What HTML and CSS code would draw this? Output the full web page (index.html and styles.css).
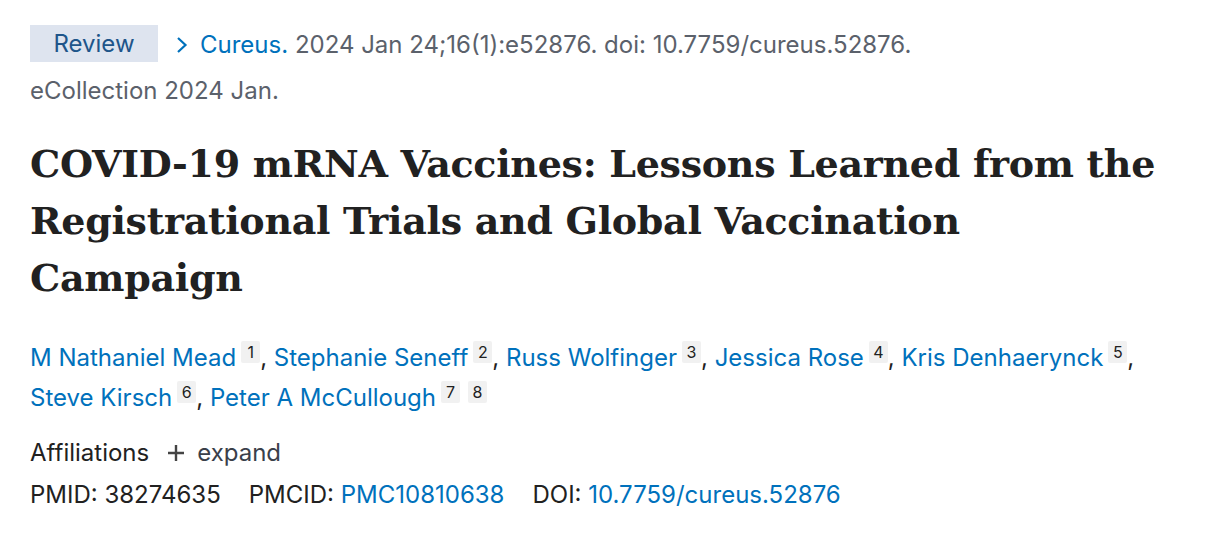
FILE: index.html
```html
<!DOCTYPE html>
<html lang="en">
<head>
<meta charset="utf-8">
<title>COVID-19 mRNA Vaccines</title>
<link rel="stylesheet" href="styles.css">
</head>
<body>
<main class="article">
  <div class="citation"><span class="badge">Review</span><span class="journal"><svg class="chev" viewBox="0 0 12 18" width="12" height="18"><path d="M2 2 L9.5 9 L2 16" fill="none" stroke="#0071bc" stroke-width="2.2"/></svg><a class="link" href="#">Cureus.</a></span> <span class="cit">2024 Jan 24;16(1):e52876. doi: 10.7759/cureus.52876.</span> <span class="secondary-date">eCollection 2024 Jan.</span></div>
  <h1 class="title">COVID-19 mRNA Vaccines: Lessons Learned from the Registrational Trials and Global Vaccination Campaign</h1>
  <div class="authors">
    <a class="link" href="#">M Nathaniel Mead</a><sup class="aff">1</sup>, <a class="link" href="#">Stephanie Seneff</a><sup class="aff">2</sup>, <a class="link" href="#">Russ Wolfinger</a><sup class="aff">3</sup>, <a class="link" href="#">Jessica Rose</a><sup class="aff">4</sup>, <a class="link" href="#">Kris Denhaerynck</a><sup class="aff">5</sup>, <a class="link" href="#">Steve Kirsch</a><sup class="aff">6</sup>, <a class="link" href="#">Peter A McCullough</a><sup class="aff">7</sup><sup class="aff">8</sup>
  </div>
  <div class="affiliations">
    <span class="aff-label">Affiliations</span>
    <span class="expand"><svg class="plus" viewBox="0 0 18 18" width="18" height="18"><path d="M9 1 V17 M1 9 H17" stroke="#444" stroke-width="2.4"/></svg>expand</span>
  </div>
  <div class="ids">
    <span class="id">PMID: <span class="num">38274635</span></span>
    <span class="id">PMCID: <a class="link" href="#">PMC10810638</a></span>
    <span class="id">DOI: <a class="link" href="#">10.7759/cureus.52876</a></span>
  </div>
</main>
</body>
</html>
```

FILE: styles.css
```css
html, body {
  margin: 0;
  padding: 0;
  background: #ffffff;
}
body {
  font-family: Inter, "Liberation Sans", sans-serif;
  color: #212121;
  font-size: 24px;
}
.article {
  padding: 22px 30px 0 30px;
  width: 1146px;
}
.link {
  color: #0071bc;
  text-decoration: none;
}
.citation {
  color: #5b616b;
  line-height: 46px;
}
.secondary-date {
  display: block;
}
.badge {
  display: inline-block;
  background: #dee4ef;
  color: #20558a;
  width: 128px;
  height: 37px;
  line-height: 37px;
  text-align: center;
  margin-right: 18px;
  vertical-align: 1px;
}
.chev {
  vertical-align: -1px;
  margin-right: 12px;
}
.title {
  font-family: "DejaVu Serif", serif;
  font-weight: bold;
  font-size: 38px;
  letter-spacing: -0.3px;
  line-height: 57px;
  margin: 21px 0 32px 0;
  color: #212121;
}
.authors {
  line-height: 40px;
  color: #212121;
}
.aff {
  display: inline-block;
  font-size: 16px;
  line-height: 22px;
  height: 22px;
  min-width: 19px;
  text-align: center;
  background: #f1f1f1;
  color: #212121;
  padding: 0 1px;
  box-sizing: border-box;
  margin-left: 5px;
  border-radius: 2px;
  vertical-align: 8px;
}
.aff + .aff {
  margin-left: 8px;
}
.affiliations {
  margin-top: 14px;
  line-height: 42px;
  display: flex;
  align-items: center;
  gap: 18px;
}
.expand {
  display: inline-flex;
  align-items: center;
  gap: 12px;
  color: #3a3f4a;
}
.ids {
  line-height: 42px;
  display: flex;
  gap: 28px;
}
```
